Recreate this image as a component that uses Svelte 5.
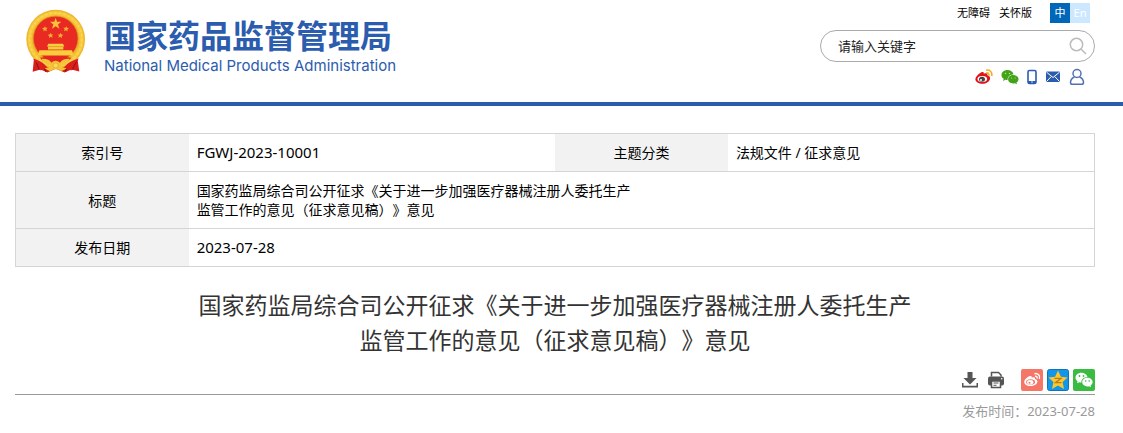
<script>
  let keyword = '';
  let lang = 'zh';
</script>

<svelte:head>
  <title>国家药品监督管理局</title>
</svelte:head>

<header>
  <div class="wrap top">
    <a class="logo" href="/">
      <svg class="emblem" viewBox="18 12 180 192" aria-hidden="true">
        <path d="M42 158 L38 199 L62 192 L82 201 L107 190 L134 201 L154 192 L178 198 L172 158 Z" fill="#d81e1c" />
        <path d="M46 162 L58 192 M172 162 L156 192 M70 180 L78 199 M144 180 L136 199" stroke="#8f1412" stroke-width="4" />
        <circle cx="107" cy="101" r="88" fill="#efb52c" />
        <circle cx="107" cy="101" r="78" fill="none" stroke="#f6c93c" stroke-width="12" />
        <circle cx="107" cy="101" r="79" fill="none" stroke="#f9d552" stroke-width="5" stroke-dasharray="9 5" />
        <circle cx="107" cy="99" r="67" fill="#e82a22" stroke="#d9921d" stroke-width="2" />
        <path d="M38 159 Q68 166 82 186 L62 195 L52 174 Z M177 159 Q146 166 132 186 L154 195 L164 174 Z" fill="#dc201e" />
        <path fill="#f7c23a" d="M107 37 l4 12 13 0 -10 8 4 13 -11 -8 -11 8 4 -13 -10 -8 13 0z" />
        <path fill="#f3b035" d="M75 62 l2 5 6 0 -4 4 2 6 -6 -3 -5 4 1 -6 -5 -4 6 -1z M139 62 l2 5 6 1 -5 4 1 6 -5 -4 -6 3 2 -6 -4 -4 6 0z M92 82 l2 5 6 0 -4 4 2 6 -6 -3 -5 4 1 -6 -5 -4 6 -1z M122 82 l2 5 6 1 -5 4 1 6 -5 -4 -6 3 2 -6 -4 -4 6 0z" />
        <path fill="#f9cd3c" d="M85 115 h44 l4 8 h-52z M84 124 h46 v8 h-46z M58 134 h98 l5 16 h-108z" />
        <path d="M84 123.500h46" stroke="#e09a28" stroke-width="2" />
        <path d="M60 157 Q107 147 154 157 Q144 174 107 176 Q70 174 60 157Z" fill="#e3261f" />
        <path d="M65 160 Q88 159 94 172 Q107 160 120 172 Q127 159 149 160 Q145 176 122 180 Q130 187 124 197 Q107 186 90 197 Q84 187 92 180 Q69 176 65 160Z" fill="#f5c337" />
        <circle cx="107" cy="180" r="8" fill="#f8d855" stroke="#dba02a" stroke-width="2" />
        <path d="M74 189 l16 -5 v13z M140 189 l-16 -5 v13z" fill="#f3c236" />
      </svg>
      <span class="names">
        <strong>国家药品监督管理局</strong>
        <span class="en">National Medical Products Administration</span>
      </span>
    </a>

    <div class="tools">
      <nav class="links">
        <a href="#access">无障碍</a>
        <a href="#care">关怀版</a>
        <span class="lang">
          <button class:on={lang === 'zh'} on:click={() => (lang = 'zh')}>中</button>
          <button class:on={lang === 'en'} on:click={() => (lang = 'en')}>En</button>
        </span>
      </nav>
      <form class="search" on:submit|preventDefault>
        <input type="text" aria-label="请输入关键字" placeholder="请输入关键字" bind:value={keyword} />
        <button aria-label="搜索">
          <svg width="18" height="18" viewBox="0 0 18 18" fill="none" stroke="#bbb" stroke-width="1.500">
            <circle cx="7.500" cy="7.500" r="6.200" />
            <path d="M12 12l5 5" />
          </svg>
        </button>
      </form>
      <nav class="social">
        <a href="#weibo" aria-label="微博">
          <svg width="18" height="16" viewBox="0 0 18 16">
            <path fill="#e2131b" d="M6.500 3.200c1.500-.6 2.600-.1 2.300 1.500 2-.8 4-.5 3.600 1.500 1.900.5 3.100 1.800 2.600 3.800-.6 2.600-3.700 4.800-7.600 4.800C3.500 14.800.400 13 .400 10.300.400 7.700 4 4.200 6.500 3.200z" />
            <ellipse cx="7.300" cy="10" rx="4.800" ry="2.900" fill="#fff" />
            <ellipse cx="7" cy="10.300" rx="3" ry="2.500" fill="#4a4240" />
            <circle cx="6" cy="11" r="1" fill="#fff" />
            <path d="M11 1.300c3.500-1 6.600 1.700 5.700 5.700M11.200 4c1.700-.5 3.100.7 2.700 2.500" fill="none" stroke="#f1ae24" stroke-width="1.600" />
          </svg>
        </a>
        <a href="#wechat" aria-label="微信">
          <svg width="18" height="16" viewBox="0 0 18 16">
            <path fill="#43a317" d="M6.500 1C3 1 .500 3.200.500 6c0 1.600.8 2.900 2.200 3.800L2.100 12l2.300-1.300c.7.200 1.400.3 2.200.3C6.300 7.800 8.800 5.400 12.500 5.400 12 2.700 9.500 1 6.500 1z" />
            <path fill="#43a317" d="M12.300 6c-3 0-5.200 1.900-5.200 4.200 0 2.400 2.300 4.200 5.200 4.200.6 0 1.200-.1 1.700-.2l2 1-.5-1.700c1.300-.8 2-1.900 2-3.300C17.500 7.900 15.200 6 12.300 6z" />
            <g fill="#b9e0a5">
              <circle cx="4.500" cy="4.500" r=".7" />
              <circle cx="8.500" cy="4.500" r=".7" />
              <circle cx="10.600" cy="9" r=".6" />
              <circle cx="14.100" cy="9" r=".6" />
            </g>
          </svg>
        </a>
        <a href="#mobile" aria-label="手机版">
          <svg width="10" height="16" viewBox="0 0 10 16">
            <rect x="1" y="1.500" width="8" height="13" rx="1.500" fill="#fff" stroke="#2b5cad" stroke-width="1.600" />
            <path d="M1 12h8v2.500H1z" fill="#2b5cad" />
            <circle cx="5" cy="13" r=".7" fill="#fff" />
          </svg>
        </a>
        <a href="#mail" aria-label="邮箱">
          <svg width="16" height="16" viewBox="0 0 16 16">
            <rect x="1" y="2.500" width="14" height="10.500" rx="1" fill="#2b5cad" />
            <path d="M1.500 3.200L8 8.500l6.500-5.300M1.500 12.500l4.800-5M14.500 12.500L9.700 7.500" fill="none" stroke="#fff" stroke-width="1" />
          </svg>
        </a>
        <a href="#user" aria-label="个人中心">
          <svg width="16" height="18" viewBox="0 0 16 18" fill="none" stroke="#5570b5" stroke-width="1.500">
            <circle cx="8" cy="5.500" r="4" />
            <path d="M5.500 9C3 10 1.500 12 1.500 14.500c0 1.500.5 1.800 1.800 1.800h9.400c1.300 0 1.800-.3 1.800-1.800C14.500 12 13 10 10.500 9" />
          </svg>
        </a>
      </nav>
    </div>
  </div>
</header>

<main class="wrap">
  <table>
    <tbody>
      <tr>
        <th scope="row">索引号</th>
        <td class="num">FGWJ-2023-10001</td>
        <th scope="row">主题分类</th>
        <td>法规文件 / 征求意见</td>
      </tr>
      <tr>
        <th scope="row">标题</th>
        <td colspan="3">国家药监局综合司公开征求《关于进一步加强医疗器械注册人委托生产<br />监管工作的意见（征求意见稿）》意见</td>
      </tr>
      <tr>
        <th scope="row">发布日期</th>
        <td class="num" colspan="3">2023-07-28</td>
      </tr>
    </tbody>
  </table>

  <h1>国家药监局综合司公开征求《关于进一步加强医疗器械注册人委托生产<br />监管工作的意见（征求意见稿）》意见</h1>

  <div class="actions">
    <button class="plain" aria-label="下载">
      <svg width="18" height="18" viewBox="0 0 18 18" fill="#555">
        <path d="M6.500 1h5v6h4L9 13.500 2.500 7h4z" />
        <path d="M1 12v4.500h16V12h-1.500v2.800h-13V12z" />
      </svg>
    </button>
    <button class="plain" aria-label="打印">
      <svg width="18" height="18" viewBox="0 0 18 18">
        <path d="M4.500 5.500v-4h7l2.500 2.500v1.500" fill="#fff" stroke="#555" stroke-width="1.500" />
        <rect x="1" y="5.500" width="16" height="9" rx="2" fill="#555" />
        <path d="M4.500 10h9v6.500h-9z" fill="#fff" stroke="#555" stroke-width="1.500" />
        <path d="M6.500 12h5M6.500 14.300h3" stroke="#555" />
        <circle cx="14.700" cy="7.700" r=".8" fill="#fff" />
      </svg>
    </button>
    <div class="share">
      <button aria-label="分享到微博">
        <svg width="22" height="22" viewBox="0 0 22 22">
          <rect width="22" height="22" rx="2" fill="#f57567" />
          <path fill="#fff" d="M8.500 7.300c1.500-.6 2.500 0 2.200 1.400 2-.8 3.700-.3 3.300 1.400 1.800.5 2.700 1.500 2.400 3-.5 2.400-3.400 4-6.700 4-3.500 0-6.400-1.700-6.400-4.200C3.300 10.600 6.200 8 8.500 7.300z" />
          <ellipse cx="9.600" cy="13" rx="4.500" ry="2.800" fill="#f57567" />
          <ellipse cx="9.200" cy="13.200" rx="3.200" ry="2.300" fill="#fff" />
          <circle cx="8.500" cy="13.800" r="1" fill="#f57567" />
          <path d="M13.500 4.700c3.500-.7 6 2 4.900 5.300M14 7.200c1.500-.3 2.600.8 2.100 2.300" fill="none" stroke="#fff" stroke-width="1.400" />
        </svg>
      </button>
      <button aria-label="分享到QQ空间">
        <svg width="22" height="22" viewBox="0 0 22 22">
          <rect x=".5" y=".5" width="21" height="21" rx="2" fill="#1296e8" stroke="#0f74b8" />
          <path fill="#fdc62c" d="M11 1.500l2.900 6.200 6.700.8-5 4.600 1.400 6.800L11 16.600l-6 3.300L6.400 13 1.400 8.500l6.700-.8z" />
          <path d="M7.500 9.300h6.500L8.500 13.700h6" fill="none" stroke="#b9801a" stroke-width="1.300" />
        </svg>
      </button>
      <button aria-label="分享到微信">
        <svg width="22" height="22" viewBox="0 0 22 22">
          <rect width="22" height="22" rx="2" fill="#3abb41" />
          <path fill="#fff" d="M8.500 3.700c-3.600 0-6 2.200-6 4.900 0 1.600.8 2.800 2.100 3.700L4 14.300l2.300-1.100c.7.200 1.400.3 2.100.3-.3-3.300 2.300-5.500 6.100-5.600-.7-2.500-3.100-4.200-6-4.200z" />
          <path fill="#fff" d="M14.400 8.800c-3 0-5.200 1.900-5.200 4.300s2.300 4.300 5.200 4.300c.6 0 1.200-.1 1.700-.2l2 1-.5-1.700c1.200-.8 2-1.900 2-3.400 0-2.400-2.200-4.300-5.200-4.300z" />
          <g fill="#3abb41">
            <circle cx="6.500" cy="7" r=".9" />
            <circle cx="10.500" cy="7" r=".9" />
            <circle cx="12.700" cy="12" r=".8" />
            <circle cx="16.200" cy="12" r=".8" />
          </g>
        </svg>
      </button>
    </div>
  </div>
  <p class="date">发布时间：2023-07-28</p>
</main>

<style>
  :global(body) {
    background: #fff;
    color: #000;
    font-family: 'Noto Sans', 'Noto Sans CJK SC', sans-serif;
    font-size: 14px;
    text-spacing-trim: space-all;
  }

  a {
    color: inherit;
    text-decoration: none;
  }
  button {
    padding: 0;
    border: 0;
    background: none;
    font: inherit;
    cursor: pointer;
  }
  svg {
    display: block;
  }

  .wrap {
    padding: 0 28px 0 15px;
  }

  header {
    border-bottom: 4px solid #2b5cad;
  }
  .top {
    display: flex;
    justify-content: space-between;
    min-height: 102px;
  }

  .logo {
    display: flex;
    align-items: flex-start;
    gap: 18px;
    padding: 9px 0 0 11px;
    color: #2b5cad;
  }
  .emblem {
    width: 60px;
    height: 65px;
  }
  .names {
    display: flex;
    flex-direction: column;
    padding-top: 5px;
  }
  .names strong {
    font-family: 'Noto Sans CJK SC', sans-serif;
    font-size: 32px;
    line-height: 40px;
  }
  .en {
    font-family: Inter, sans-serif;
    font-size: 15px;
    line-height: 24px;
  }

  .tools {
    display: flex;
    flex-direction: column;
    width: 275px;
    padding-top: 3px;
  }
  .links {
    display: flex;
    justify-content: flex-end;
    gap: 9px;
    padding-right: 5px;
    font-size: 11px;
    line-height: 20px;
  }
  .lang {
    display: flex;
    margin-left: 9px;
  }
  .lang button {
    width: 20px;
    height: 20px;
    background: #cce8ff;
    color: #fff;
  }
  .lang .on {
    background: #0067b8;
  }

  .search {
    display: flex;
    align-items: center;
    box-sizing: border-box;
    height: 32px;
    margin-top: 7px;
    padding: 0 7px 0 17px;
    border: 1px solid #aaa;
    border-radius: 16px;
  }
  .search input {
    flex: 1;
    min-width: 0;
    padding: 0;
    border: 0;
    outline: none;
    background: none;
    font: inherit;
    font-size: 13px;
  }
  .search input::placeholder {
    color: #222;
  }

  .social {
    display: flex;
    justify-content: flex-end;
    align-items: center;
    gap: 8px;
    margin-top: 6px;
    padding-right: 10px;
  }

  table {
    width: 100%;
    margin-top: 27px;
    border: 1px solid #d5d5d5;
    border-collapse: collapse;
    table-layout: fixed;
    line-height: 19px;
  }
  tr {
    border-bottom: 1px solid #d5d5d5;
  }
  th {
    width: 16%;
    padding: 9px 0;
    background: #f2f2f2;
    font-weight: normal;
  }
  td {
    padding: 9px 8px;
  }
  .num {
    font-size: 15px;
  }

  h1 {
    margin: 21px 0 0;
    color: #333;
    font-size: 23px;
    font-weight: normal;
    line-height: 35px;
    text-align: center;
  }

  .actions {
    display: flex;
    justify-content: flex-end;
    align-items: center;
    gap: 8px;
    margin-top: 11px;
    padding-bottom: 3px;
    border-bottom: 1px solid #999;
  }
  .share {
    display: flex;
    gap: 4px;
    margin-left: 8px;
  }
  .date {
    margin: 6px 0 0;
    color: #999;
    font-size: 13px;
    line-height: 20px;
    text-align: right;
  }
</style>
